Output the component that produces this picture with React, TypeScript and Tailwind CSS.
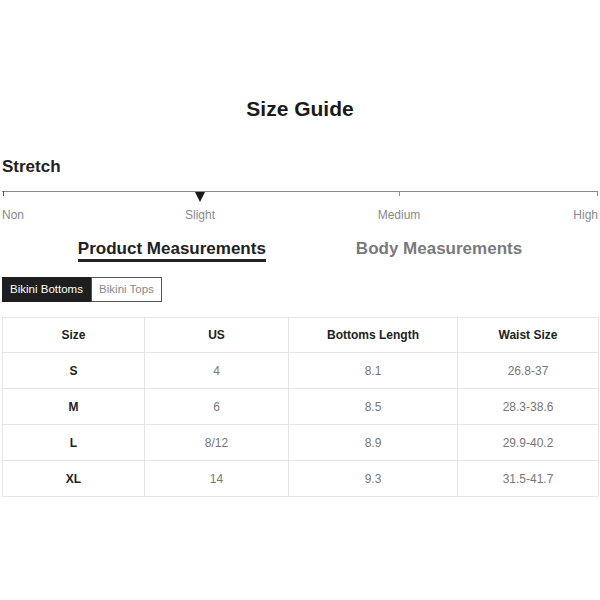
import React from "react";

const rows = [
  ["S", "4", "8.1", "26.8-37"],
  ["M", "6", "8.5", "28.3-38.6"],
  ["L", "8/12", "8.9", "29.9-40.2"],
  ["XL", "14", "9.3", "31.5-41.7"],
];

export default function App() {
  return (
    <div
      className="w-[600px] h-[600px] overflow-hidden bg-white px-[2px] pt-[97px]"
      style={{ fontFamily: '"Liberation Sans", Arial, sans-serif' }}
    >
      <h1 className="h-[24px] leading-[24px] text-[21px] font-bold text-center text-[#1a1a1a]">
        Size Guide
      </h1>
      <div className="mt-[36px] h-[20px] leading-[20px] text-[17px] font-bold text-[#222]">
        Stretch
      </div>
      <svg className="block mt-[13px]" width="596" height="14" viewBox="0 0 596 14">
        <rect x="0" y="1" width="596" height="1" fill="#8a8a8a" />
        <rect x="1" y="1" width="1" height="5" fill="#555" />
        <rect x="397" y="1" width="1" height="5" fill="#8a8a8a" />
        <rect x="595" y="1" width="1" height="5" fill="#8a8a8a" />
        <polygon points="193,2 203,2 198,12" fill="#1a1a1a" />
      </svg>
      <div className="relative mt-[3px] h-[16px] text-[12px] leading-[16px] text-[#8a8a8a]">
        <span className="absolute left-0 top-0">Non</span>
        <span className="absolute left-[198px] top-0 -translate-x-1/2">Slight</span>
        <span className="absolute left-[397px] top-0 -translate-x-1/2">Medium</span>
        <span className="absolute right-0 top-0">High</span>
      </div>
      <div className="mt-[16px] flex justify-center gap-[90px]">
        <div className="h-[23px] leading-[20px] text-[17px] font-bold text-[#222] border-b-[3px] border-[#222]">
          Product Measurements
        </div>
        <div className="h-[23px] leading-[20px] text-[17px] font-bold text-[#7a7a7a] border-b-[3px] border-transparent">
          Body Measurements
        </div>
      </div>
      <div className="mt-[15px] flex">
        <div className="w-[89px] h-[25px] leading-[25px] text-center text-[11.5px] bg-[#1e1e1e] text-white">
          Bikini Bottoms
        </div>
        <div className="w-[71px] h-[25px] leading-[23px] text-center text-[11.5px] border border-[#555] text-[#888]">
          Bikini Tops
        </div>
      </div>
      <table className="mt-[15px] w-[596px] border-collapse text-[12px] table-fixed">
        <colgroup>
          <col className="w-[142px]" />
          <col className="w-[144px]" />
          <col className="w-[169px]" />
          <col className="w-[141px]" />
        </colgroup>
        <thead>
          <tr className="h-[35px]">
            {["Size", "US", "Bottoms Length", "Waist Size"].map((h) => (
              <th key={h} className="border border-[#e6e6e6] font-bold text-[#222] text-center p-0">
                {h}
              </th>
            ))}
          </tr>
        </thead>
        <tbody>
          {rows.map((r) => (
            <tr key={r[0]} className="h-[36px]">
              {r.map((c, i) => (
                <td
                  key={i}
                  className={
                    i === 0
                      ? "border border-[#e6e6e6] text-center font-bold text-[#222] p-0"
                      : "border border-[#e6e6e6] text-center text-[#777] p-0"
                  }
                >
                  {c}
                </td>
              ))}
            </tr>
          ))}
        </tbody>
      </table>
    </div>
  );
}
